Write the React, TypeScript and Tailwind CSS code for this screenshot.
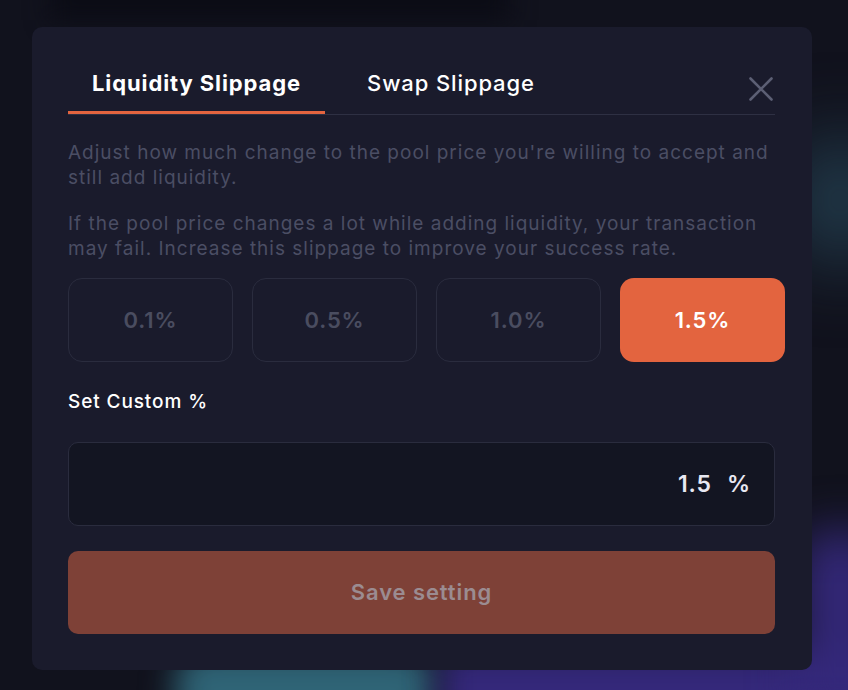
import { useState } from "react";

const presets = ["0.1%", "0.5%", "1.0%", "1.5%"];

export default function App() {
  const [tab, setTab] = useState("liquidity");
  const [picked, setPicked] = useState("1.5%");

  return (
    <div
      className="relative w-full h-[690px] overflow-hidden bg-[#11121d] tracking-[0.9px]"
      style={{ fontFamily: "Inter, 'Noto Sans', sans-serif" }}
    >
      {/* blurred backdrop behind the modal */}
      <div className="absolute left-[175px] top-[650px] w-[260px] h-[80px] rounded-[30px] bg-[#2f6476] blur-lg" />
      <div className="absolute left-[440px] top-[650px] w-[460px] h-[80px] bg-[#34287a] blur-lg" />
      <div className="absolute left-[800px] top-[530px] w-[80px] h-[200px] rounded-[30px] bg-[#34287a] blur-xl" />
      <div className="absolute left-[800px] top-[140px] w-[80px] h-[120px] rounded-full bg-[#27485a] blur-2xl" />
      <div className="absolute left-[50px] top-[-20px] w-[460px] h-[40px] bg-[#0b0c15] blur-md" />

      <div className="relative ml-[32px] mt-[27px] w-[780px] h-[643px] rounded-[10px] bg-[#1a1b2c] pl-[36px] pr-[37px] pt-[42px] pb-[36px]">
        <div className="flex items-end border-b border-[#2e3043]">
          <button
            onClick={() => setTab("liquidity")}
            className={`px-6 pb-[14px] text-[22px] leading-[28px] font-bold border-b-[3px] ${
              tab === "liquidity" ? "text-white border-[#e3643f]" : "text-white/90 border-transparent font-medium"
            }`}
          >
            Liquidity Slippage
          </button>
          <button
            onClick={() => setTab("swap")}
            className={`ml-[18px] px-6 pb-[14px] text-[22px] leading-[28px] border-b-[3px] ${
              tab === "swap" ? "text-white border-[#e3643f] font-bold" : "text-white border-transparent font-medium"
            }`}
          >
            Swap Slippage
          </button>
          <button className="ml-auto mb-[13px] mr-[2px] text-[#5c5f74]">
            <svg width="24" height="24" viewBox="0 0 24 24" fill="none" stroke="currentColor" strokeWidth="2.6" strokeLinecap="round">
              <path d="M1.5 1.5l21 21M22.5 1.5l-21 21" />
            </svg>
          </button>
        </div>

        <div className="mt-[25px] text-[19px] leading-[25px] tracking-[1px] text-[#4b4e64] space-y-[21px]">
          <p>Adjust how much change to the pool price you're willing to accept and still add liquidity.</p>
          <p>
            If the pool price changes a lot while adding liquidity, your transaction may fail. Increase this slippage to
            improve your success rate.
          </p>
        </div>

        <div className="mt-[17px] w-[717px] grid grid-cols-4 gap-[19px]">
          {presets.map((p) => (
            <button
              key={p}
              onClick={() => setPicked(p)}
              className={`h-[84px] rounded-[14px] text-[22px] font-semibold ${
                picked === p ? "bg-[#e3643f] text-white" : "border border-[#2a2c3e] text-[#4a4d60]"
              }`}
            >
              {p}
            </button>
          ))}
        </div>

        <div className="mt-[28px] text-[19px] leading-[24px] font-medium text-white">Set Custom %</div>

        <div className="mt-[28px] h-[84px] rounded-[10px] border border-[#2a2c3e] bg-[#131522] flex items-center justify-end pr-[23px] gap-[15px] text-[23px] font-semibold text-[#e8e8f2]">
          <span>1.5</span>
          <span>%</span>
        </div>

        <button className="mt-[25px] w-full h-[83px] rounded-[10px] bg-[#7e4137] text-[22px] font-semibold text-[#9b8c91]">
          Save setting
        </button>
      </div>
    </div>
  );
}
